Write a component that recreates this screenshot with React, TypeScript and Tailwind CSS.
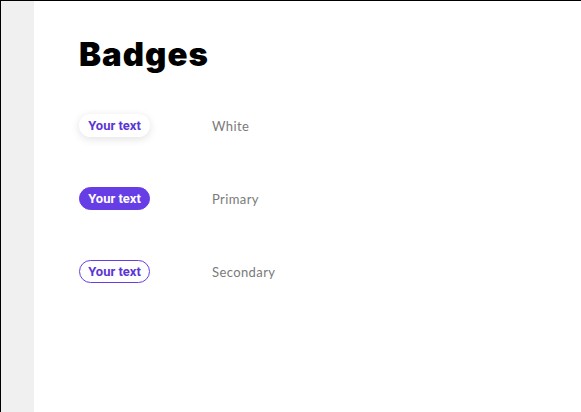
const variants = [
  {
    label: "White",
    badge: "bg-white text-[#5b35d5] shadow-[0_2px_8px_rgba(0,0,0,0.12)]",
  },
  {
    label: "Primary",
    badge: "bg-[#673de6] text-white border border-[#673de6]",
  },
  {
    label: "Secondary",
    badge: "bg-white text-[#5b35d5] border border-[#673de6]",
  },
];

export default function App() {
  return (
    <main className="flex h-[412px] w-[581px] overflow-hidden border-l border-t border-black bg-white">
      <aside className="w-[33px] shrink-0 bg-[#f0f0f0]" />
      <section className="flex-1 pl-[45px] pt-[31px]">
        <h1 className="font-['Inter',sans-serif] text-[33px] font-black leading-[44px] tracking-[1px] text-black">
          Badges
        </h1>
        <div className="mt-[38px] flex flex-col gap-[50px]">
          {variants.map((v) => (
            <div key={v.label} className="flex h-[23px] items-center">
              <span
                className={`flex h-[23px] w-[71px] items-center justify-center rounded-full font-['Roboto',sans-serif] text-[13px] font-bold ${v.badge}`}
              >
                Your text
              </span>
              <span className="ml-[62px] mt-[2px] font-['Lato',sans-serif] text-[13px] tracking-[0.4px] text-[#7a7a7a]">
                {v.label}
              </span>
            </div>
          ))}
        </div>
      </section>
    </main>
  );
}
